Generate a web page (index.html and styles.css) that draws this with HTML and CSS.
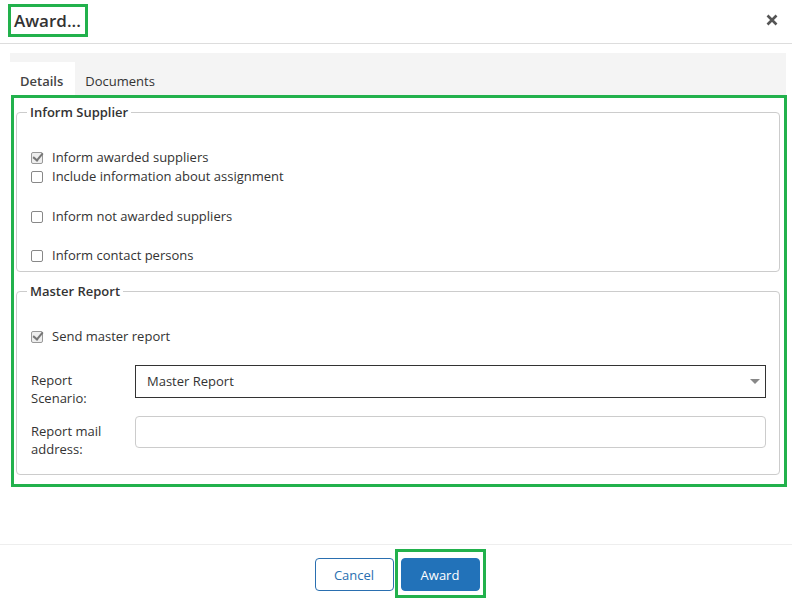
FILE: index.html
```html
<!DOCTYPE html>
<html>
<head>
    <title>Award</title>
    <meta charset="UTF-8">
    <link rel="stylesheet" href="styles.css">
</head>
<body>
    <div class="dialog">
        <div class="dialog-header">
            <span class="title marked">Award...</span>
            <svg class="close" width="12" height="12" viewBox="0 0 12 12">
                <path d="M1.5 1.5 L10.5 10.5 M10.5 1.5 L1.5 10.5" stroke="#555" stroke-width="2.6" stroke-linecap="butt"/>
            </svg>
        </div>

        <div class="dialog-body">
            <div class="tabs">
                <div class="tab active">Details</div>
                <div class="tab">Documents</div>
            </div>

            <div class="panel marked">
                <fieldset class="suppliers">
                    <legend>Inform Supplier</legend>
                    <div class="group">
                        <label class="check"><span class="box checked"></span>Inform awarded suppliers</label>
                        <label class="check"><span class="box"></span>Include information about assignment</label>
                    </div>
                    <div class="group">
                        <label class="check"><span class="box"></span>Inform not awarded suppliers</label>
                    </div>
                    <div class="group last">
                        <label class="check"><span class="box"></span>Inform contact persons</label>
                    </div>
                </fieldset>

                <fieldset class="report">
                    <legend>Master Report</legend>
                    <div class="group">
                        <label class="check"><span class="box checked"></span>Send master report</label>
                    </div>
                    <div class="field first">
                        <div class="field-label">Report Scenario:</div>
                        <div class="select">Master Report<span class="arrow"></span></div>
                    </div>
                    <div class="field">
                        <div class="field-label">Report mail address:</div>
                        <div class="input"></div>
                    </div>
                </fieldset>
            </div>
        </div>

        <div class="dialog-footer">
            <button class="btn btn-outline">Cancel</button>
            <button class="btn btn-primary">Award</button>
        </div>
    </div>
</body>
</html>
```

FILE: styles.css
```css
body {
    margin: 0;
    font-family: "Open Sans", sans-serif;
    font-size: 13px;
    color: #333;
    background-color: white;
}
.dialog {
    height: 610px;
    display: flex;
    flex-direction: column;
}
.dialog-header {
    height: 43px;
    border-bottom: 1px solid #ddd;
    display: flex;
    align-items: center;
    justify-content: space-between;
    padding: 0 14px 0 11px;
}
.title {
    font-size: 17px;
    font-weight: 600;
    color: #333;
    padding: 2px 4px 2px 3px;
    margin-top: -2px;
}
.marked {
    outline: 3px solid #22b14c;
    outline-offset: 0;
}
.close {
    margin-top: -3px;
}
.dialog-body {
    flex: 1;
    padding: 9px 6px 0 10px;
}
.tabs {
    display: flex;
    background-color: #f4f4f4;
    padding-top: 9px;
}
.tab {
    height: 35px;
    line-height: 38px;
    padding: 0 12px 0 10px;
    color: #333;
}
.tab.active {
    background-color: white;
    font-weight: 600;
    color: #444;
}
.panel {
    margin: 1px 2px 0 4px;
    padding: 5px 4px 9px 2px;
}
fieldset {
    border: 1px solid #ccc;
    border-radius: 4px;
    margin: 0;
    padding: 0 13px 6px 14px;
}
fieldset.report {
    margin-top: 10px;
    padding-bottom: 16px;
}
legend {
    font-weight: 600;
    color: #333;
    padding: 0 3px;
    margin-left: -4px;
    line-height: 18px;
}
.group {
    margin-top: 21px;
}
.group.last {
    margin-top: 20px;
}
.group:first-of-type {
    margin-top: 27px;
}
.check {
    display: flex;
    align-items: center;
    line-height: 19px;
    color: #333;
}
.box {
    width: 10px;
    height: 10px;
    border: 1px solid #888;
    border-radius: 2px;
    margin-right: 9px;
    position: relative;
    background-color: white;
}
.box.checked {
    background-color: #eee;
    border-color: #999;
}
.box.checked::after {
    content: "";
    position: absolute;
    left: 3px;
    top: -2px;
    width: 4px;
    height: 8px;
    border: solid #777;
    border-width: 0 2px 2px 0;
    transform: rotate(40deg);
}
.field {
    display: flex;
    align-items: flex-start;
    margin-top: 9px;
}
.field.first {
    margin-top: 19px;
}
.field-label {
    width: 104px;
    line-height: 18px;
    padding-top: 6px;
    padding-right: 20px;
    box-sizing: border-box;
}
.select {
    flex: 1;
    height: 33px;
    border: 1px solid #333;
    box-sizing: border-box;
    line-height: 31px;
    padding-left: 11px;
    position: relative;
}
.arrow {
    position: absolute;
    right: 5px;
    top: 13px;
    border-left: 5px solid transparent;
    border-right: 5px solid transparent;
    border-top: 5px solid #888;
}
.input {
    flex: 1;
    height: 32px;
    border: 1px solid #ccc;
    border-radius: 4px;
    box-sizing: border-box;
}
.dialog-footer {
    border-top: 1px solid #eee;
    height: 66px;
    display: flex;
    justify-content: center;
    align-items: flex-start;
    gap: 7px;
    padding-top: 13px;
    padding-left: 2px;
    box-sizing: border-box;
}
.btn {
    width: 79px;
    height: 33px;
    font-family: "Open Sans", sans-serif;
    font-size: 13px;
    border-radius: 4px;
    cursor: pointer;
}
.btn-outline {
    background-color: white;
    border: 1px solid #2a6fb0;
    color: #2a6fb0;
}
.btn-primary {
    background-color: #2272b9;
    border: 1px solid #2272b9;
    color: white;
    position: relative;
}
.btn-primary::after {
    content: "";
    position: absolute;
    top: -10px;
    bottom: -8px;
    left: -7px;
    right: -7px;
    border: 3px solid #22b14c;
}
```
